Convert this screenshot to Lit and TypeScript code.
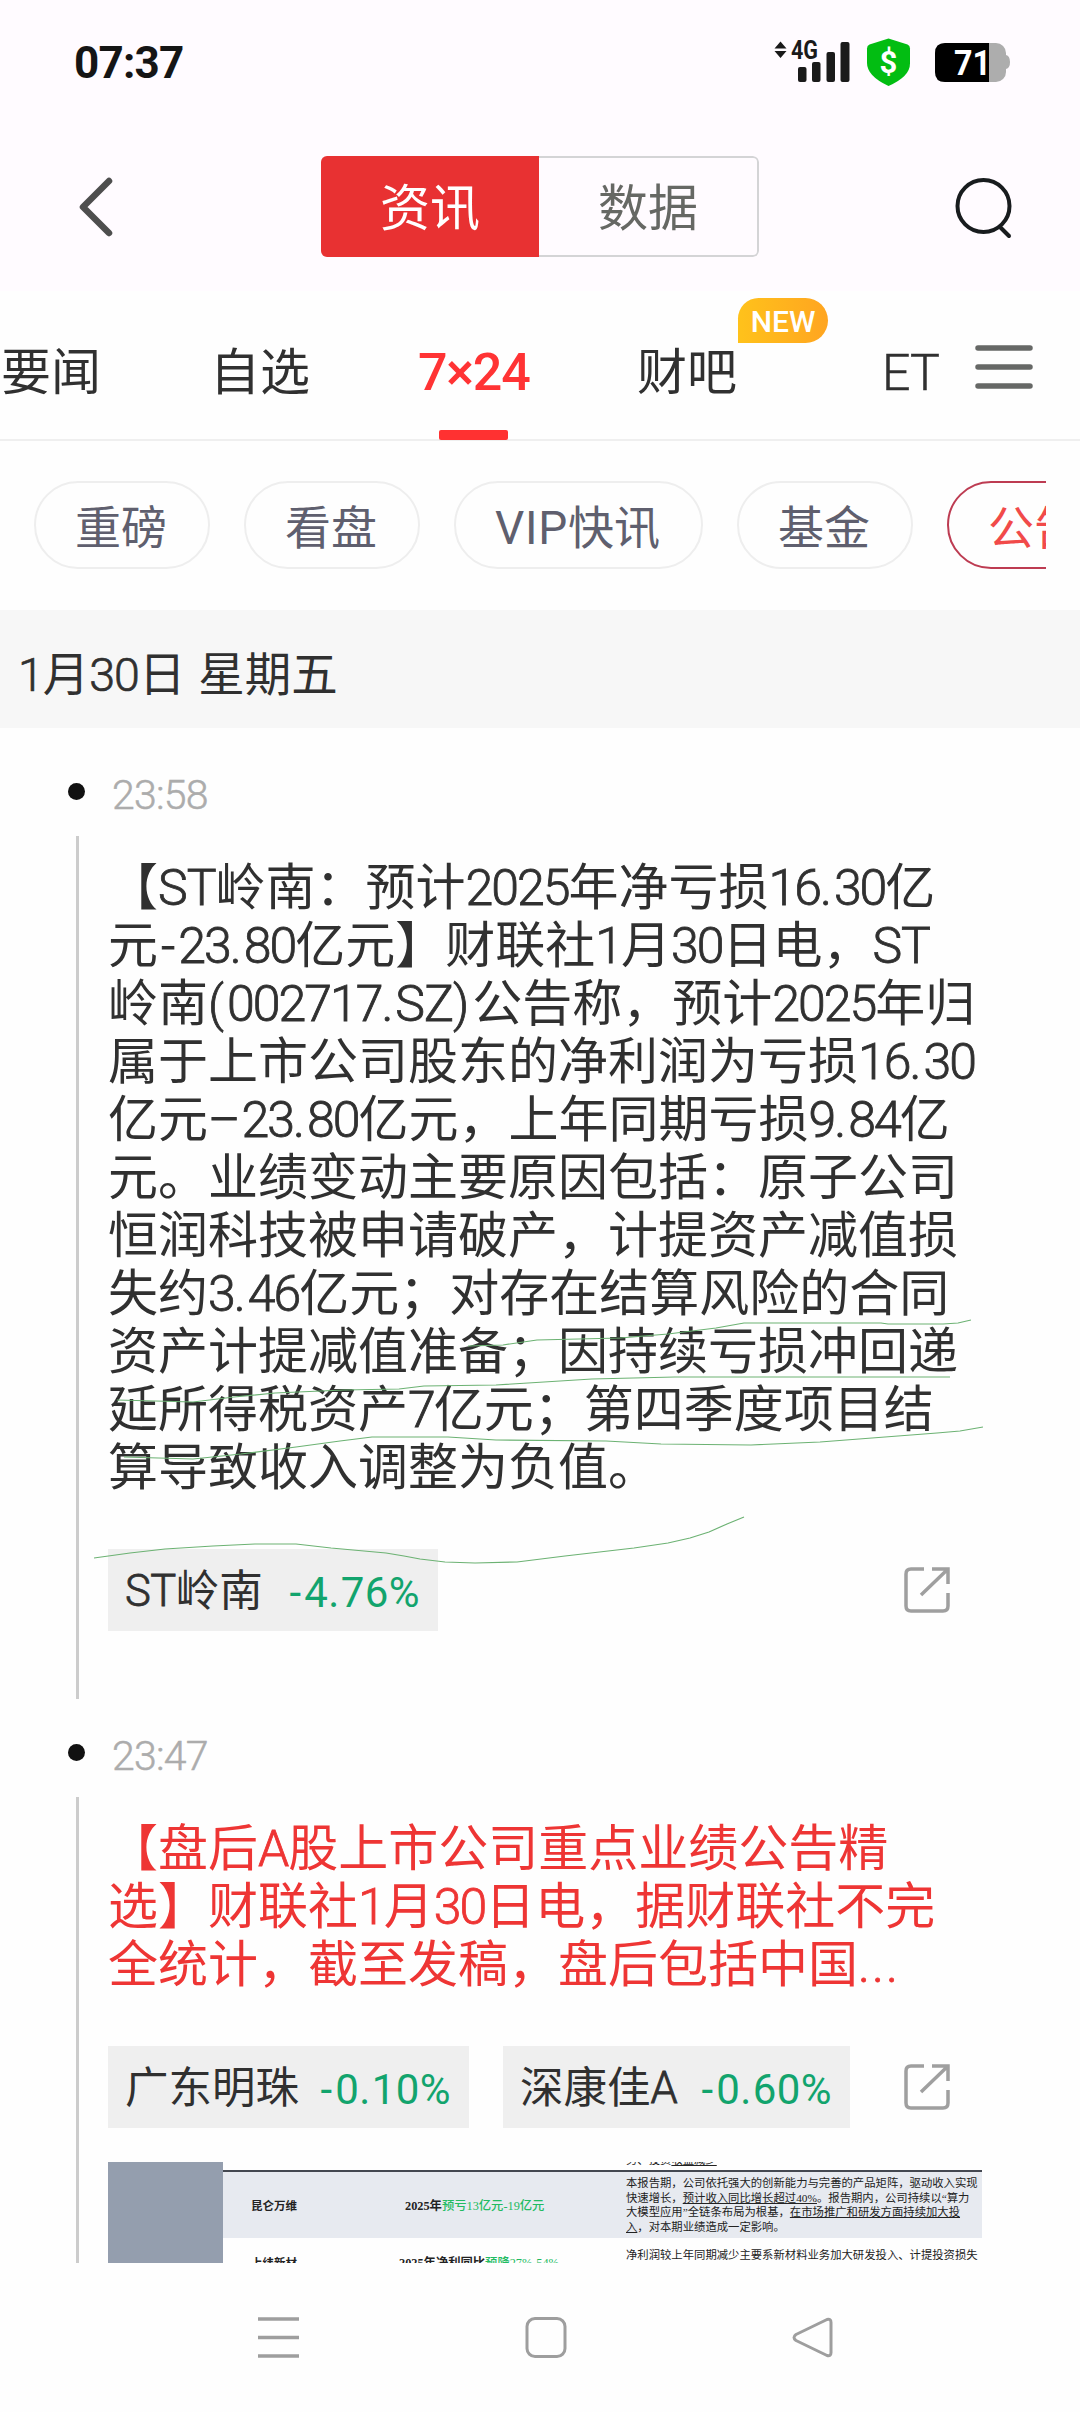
import { LitElement, html, css, svg } from 'lit';
import { customElement, property } from 'lit/decorators.js';

// Each kind of Latin character gets its own tracking next to the Chinese text.
const kindOf = (part: string) => {
  if (/^[0-9]/.test(part)) return 'lt d';
  if (/^[A-Za-z]/.test(part)) return 'lt a';
  if (/^[.]/.test(part)) return 'lt p';
  if (/^[-]/.test(part)) return 'lt h';
  if (/^[()]/.test(part)) return 'lt r';
  return 'lt b';
};

const mix = (text: string) =>
  text
    .split(/([0-9]+|[A-Za-z]+|[.]+|-|[()]|\u2013|%| )/)
    .filter((part) => part.length > 0)
    .map((part) => (/^[\x20-\x7e\u2013]/.test(part) ? html`<span class=${kindOf(part)}>${part}</span>` : part));

interface Stock {
  name: string;
  change: string;
  kind: string;
}

const FIRST = [
  '【ST岭南：预计2025年净亏损16.30亿',
  '元-23.80亿元】财联社1月30日电，ST',
  '岭南(002717.SZ)公告称，预计2025年归',
  '属于上市公司股东的净利润为亏损16.30',
  '亿元–23.80亿元，上年同期亏损9.84亿',
  '元。业绩变动主要原因包括：原子公司',
  '恒润科技被申请破产，计提资产减值损',
  '失约3.46亿元；对存在结算风险的合同',
  '资产计提减值准备；因持续亏损冲回递',
  '延所得税资产7亿元；第四季度项目结',
  '算导致收入调整为负值。',
];

const SECOND = [
  '【盘后A股上市公司重点业绩公告精',
  '选】财联社1月30日电，据财联社不完',
  '全统计，截至发稿，盘后包括中国...',
];

@customElement('status-bar')
class StatusBar extends LitElement {
  static styles = css`
    :host {
      display: flex;
      height: 124px;
      padding: 0 70px 0 74px;
      align-items: center;
      justify-content: space-between;
      font-family: Roboto, sans-serif;
    }
    .time {
      font-size: 44px;
      line-height: 50px;
      padding-top: 2px;
      font-weight: 700;
      letter-spacing: -0.8px;
      color: #151515;
    }
    .icons {
      display: block;
    }
  `;
  render() {
    return html`
      <span class="time">07:37</span>
      <svg class="icons" width="240" height="60" viewBox="770 32 240 60">
        <path d="M780.500 41.500l6 7h-12zM780.500 58l6-7h-12z" fill="#1a1a1a" />
        <text x="791" y="58.500" font-size="25" font-weight="700" textLength="27" lengthAdjust="spacingAndGlyphs" fill="#1a1a1a">4G</text>
        <g fill="#1a1a1a">
          <rect x="798" y="67" width="8.500" height="15" rx="2" />
          <rect x="812" y="62" width="8.500" height="20" rx="2" />
          <rect x="826.500" y="52" width="8.500" height="30" rx="2" />
          <rect x="840.500" y="42" width="9" height="40" rx="2" />
        </g>
        <path d="M888.500 38.500l19 6q2.500 1 2.500 4v15q0 13-21.500 22.500Q867 76 867 63V48.500q0-3 2.500-4z" fill="#02bd12" />
        <text x="888.500" y="73" font-size="31" font-weight="700" text-anchor="middle" fill="#fff">$</text>
        <path d="M1003 55h3q4 1 4 7t-4 7h-3z" fill="#adadad" />
        <rect x="935" y="43" width="71" height="39" rx="10" fill="#adadad" />
        <path d="M945 43h44v39h-44q-10 0-10-10V53q0-10 10-10z" fill="#000" />
        <text x="954" y="75" font-size="35" font-weight="700" textLength="37" lengthAdjust="spacingAndGlyphs" fill="#fff">71</text>
      </svg>
    `;
  }
}

@customElement('title-bar')
class TitleBar extends LitElement {
  static styles = css`
    :host {
      display: flex;
      height: 167px;
      padding: 0 64px 2px 76px;
      box-sizing: border-box;
      align-items: center;
      justify-content: space-between;
      font-family: Roboto, 'Noto Sans CJK SC', sans-serif;
    }
    svg {
      display: block;
    }
    .seg {
      display: flex;
      width: 438px;
      height: 101px;
      margin-left: 12px;
      box-sizing: border-box;
      border-radius: 6px;
      overflow: hidden;
      font-size: 50px;
      line-height: 106px;
      text-align: center;
    }
    .on {
      flex: 1;
      background: #e83132;
      color: #fff;
    }
    .off {
      flex: 1;
      box-sizing: border-box;
      border: 2px solid #d4d4d6;
      border-left: 0;
      border-radius: 0 6px 6px 0;
      line-height: 102px;
      color: #666864;
    }
  `;
  render() {
    return html`
      <svg width="40" height="64" viewBox="0 0 40 64">
        <path d="M33 6L7 32l26 26" fill="none" stroke="#4e4e4e" stroke-width="6.500" stroke-linecap="round" stroke-linejoin="round" />
      </svg>
      <div class="seg"><div class="on">资讯</div><div class="off">数据</div></div>
      <svg width="64" height="64" viewBox="0 0 64 64">
        <circle cx="31.500" cy="31" r="26" fill="none" stroke="#181c1e" stroke-width="4" />
        <path d="M49 53l8 8" stroke="#181c1e" stroke-width="4" stroke-linecap="round" />
      </svg>
    `;
  }
}

@customElement('channel-tabs')
class ChannelTabs extends LitElement {
  static styles = css`
    :host {
      display: flex;
      height: 150px;
      box-sizing: border-box;
      border-bottom: 2px solid #efefef;
      font-family: Roboto, 'Noto Sans CJK SC', sans-serif;
      font-size: 50px;
      line-height: 58px;
      color: #303030;
      padding-top: 53px;
    }
    .tab {
      position: relative;
      white-space: nowrap;
      flex: none;
    }
    .w1 {
      width: 210px;
      padding-left: 1px;
      box-sizing: border-box;
    }
    .w2 {
      width: 208px;
    }
    .w3 {
      width: 219px;
    }
    .w4 {
      width: 245px;
    }
    .w5 {
      width: 93px;
      font-weight: 300;
      letter-spacing: -1px;
      -webkit-text-stroke: 0.5px currentColor;
    }
    .active {
      color: #ff3334;
      font-weight: 500;
      font-size: 52px;
      letter-spacing: -1.2px;
    }
    .active::after {
      content: '';
      position: absolute;
      left: 21px;
      top: 86px;
      width: 69px;
      height: 10px;
      border-radius: 2px;
      background: #ff3131;
    }
    .badge {
      position: absolute;
      left: 101px;
      top: -46px;
      width: 90px;
      height: 45px;
      border-radius: 21px 23px 23px 0;
      background: linear-gradient(90deg, #ffc21b, #ffa520);
      color: #fff;
      font-size: 30px;
      line-height: 47px;
      font-weight: 500;
      text-align: center;
    }
    .menu {
      display: block;
      margin-top: 1px;
    }
  `;
  render() {
    return html`
      <div class="tab w1">要闻</div>
      <div class="tab w2">自选</div>
      <div class="tab w3 active">7×24</div>
      <div class="tab w4">财吧<span class="badge">NEW</span></div>
      <div class="tab w5">ET</div>
      <svg class="menu" width="58" height="60" viewBox="0 0 58 60">
        <path d="M3 3h52M3 22h52M3 41h52" stroke="#666866" stroke-width="5.500" stroke-linecap="round" />
      </svg>
    `;
  }
}

@customElement('filter-pills')
class FilterPills extends LitElement {
  static styles = css`
    :host {
      display: flex;
      width: 1046px;
      height: 169px;
      box-sizing: border-box;
      padding: 40px 0 0 34px;
      gap: 34px;
      overflow: hidden;
      font-family: Roboto, 'Noto Sans CJK SC', sans-serif;
    }
    .pill {
      flex: none;
      height: 88px;
      box-sizing: border-box;
      border: 2px solid #eee;
      border-radius: 44px;
      padding: 0 41px 0 39px;
      font-size: 46px;
      line-height: 90px;
      color: #5f5f6e;
      white-space: nowrap;
    }
    .lt {
      letter-spacing: 0.7px;
    }
    .on {
      border-color: #bd3c52;
      color: #f14a49;
    }
  `;
  render() {
    return html`
      <div class="pill">重磅</div>
      <div class="pill">看盘</div>
      <div class="pill">${mix('VIP快讯')}</div>
      <div class="pill">基金</div>
      <div class="pill on">公告</div>
    `;
  }
}

@customElement('report-preview')
class ReportPreview extends LitElement {
  static styles = css`
    :host {
      display: grid;
      grid-template-columns: 115px 759px;
      width: 874px;
      height: 101px;
      overflow: hidden;
      font-family: 'Liberation Serif', 'Noto Sans CJK SC', serif;
      font-size: 11.35px;
      color: #222;
    }
    .side {
      background: #949eae;
    }
    .prev {
      height: 8px;
      overflow: hidden;
      padding-left: 403px;
      line-height: 6px;
    }
    .prev span {
      display: block;
      margin-top: -5px;
      white-space: nowrap;
    }
    .row {
      display: grid;
      grid-template-columns: 151px 252px 356px;
      align-items: center;
      height: 68px;
      box-sizing: border-box;
      border-top: 2px solid #444851;
      background: #e7eaf0;
      white-space: nowrap;
    }
    .name {
      font-weight: 700;
      padding-left: 28px;
      font-size: 11.5px;
    }
    .mid {
      font-weight: 700;
      padding-left: 31px;
      font-size: 12.3px;
    }
    .g {
      font-weight: 500;
      color: #22bb62;
    }
    .row .desc {
      line-height: 14.5px;
    }
    .next {
      background: #fefefe;
      border: 0;
      height: 47px;
    }
    .next .mid {
      padding-left: 25px;
    }
    .next .desc {
      padding-bottom: 12px;
    }
    u {
      text-underline-offset: 1px;
    }
  `;
  render() {
    return html`
      <div class="side"></div>
      <div>
        <div class="prev"><span>务、投资<u>收益减少</u></span></div>
        <div class="row">
          <div class="name">昆仑万维</div>
          <div class="mid">2025年<span class="g">预亏13亿元-19亿元</span></div>
          <div class="desc">
            本报告期，公司依托强大的创新能力与完善的产品矩阵，驱动收入实现<br />快速增长，<u>预计收入同比增长超过40%</u>。报告期内，公司持续以“算力<br />大模型应用”全链条布局为根基，<u>在市场推广和研发方面持续加大投</u><br /><u>入</u>，对本期业绩造成一定影响。
          </div>
        </div>
        <div class="row next">
          <div class="name">上纬新材</div>
          <div class="mid">2025年净利同比<span class="g">预降27%-54%</span></div>
          <div class="desc">净利润较上年同期减少主要系新材料业务加大研发投入、计提投资损失</div>
        </div>
      </div>
    `;
  }
}

@customElement('news-item')
class NewsItem extends LitElement {
  @property() time = '';
  @property({ attribute: false }) lines: string[] = [];
  @property({ attribute: false }) stocks: Stock[] = [];
  @property({ type: Boolean }) hot = false;
  @property({ type: Boolean }) preview = false;

  static styles = css`
    :host {
      display: block;
      font-family: Roboto, 'Noto Sans CJK SC', sans-serif;
    }
    .head {
      display: flex;
      align-items: center;
      height: 108px;
      box-sizing: border-box;
      padding: 26px 0 0 68px;
      gap: 27px;
      color: #acacac;
      font-size: 41px;
      font-weight: 300;
      -webkit-text-stroke: 0.5px currentColor;
      line-height: 50px;
      letter-spacing: -0.8px;
    }
    .head.follow {
      height: 98px;
      padding-top: 16px;
    }
    .dot {
      width: 17px;
      height: 17px;
      border-radius: 50%;
      background: #111;
      margin-bottom: 7px;
    }
    .body {
      margin-left: 76px;
      border-left: 3px solid #ccc;
      padding: 23px 0 0 29px;
    }
    .line {
      height: 58px;
      line-height: 58px;
      font-size: 50px;
      white-space: nowrap;
      color: #303030;
    }
    .lt {
      font-weight: 300;
      -webkit-text-stroke: 0.8px currentColor;
    }
    .d {
      letter-spacing: -2px;
    }
    .a {
      letter-spacing: -1px;
    }
    .p {
      letter-spacing: 2px;
    }
    .h {
      letter-spacing: 3px;
      margin-left: 3px;
    }
    .r {
      letter-spacing: 3px;
    }
    .b {
      letter-spacing: 1px;
    }
    .hot .line {
      color: #ee3534;
    }
    .tools {
      display: flex;
      width: 842px;
      height: 82px;
      margin-top: 52px;
      gap: 34px;
      align-items: center;
    }
    .tag {
      display: flex;
      height: 82px;
      box-sizing: border-box;
      padding: 0 18px 0 17px;
      justify-content: space-between;
      background: #efefef;
      font-size: 43.5px;
      line-height: 86px;
      white-space: nowrap;
      color: #303030;
    }
    .tag .a {
      letter-spacing: -0.5px;
    }
    .st {
      width: 330px;
    }
    .gd {
      width: 361px;
    }
    .sz {
      width: 347px;
    }
    .chg {
      color: #12a46d;
      font-size: 42px;
      line-height: 88px;
    }
    .chg .lt {
      font-weight: 400;
      letter-spacing: 0.4px;
      -webkit-text-stroke: 0;
    }
    .chg .p {
      letter-spacing: 1.5px;
    }
    .chg .h {
      letter-spacing: 3px;
    }
    .share {
      margin-left: auto;
      display: block;
    }
    .pad {
      height: 68px;
    }
    .shot {
      padding-top: 34px;
    }
  `;

  render() {
    return html`
      <div class="head ${this.hot ? 'follow' : ''}"><span class="dot"></span><span>${this.time}</span></div>
      <div class="body ${this.hot ? 'hot' : ''}">
        ${this.lines.map((l) => html`<div class="line">${mix(l)}</div>`)}
        <div class="tools">
          ${this.stocks.map(
            (s) => html`<div class="tag ${s.kind}"><span>${mix(s.name)}</span><span class="chg">${mix(s.change)}</span></div>`,
          )}
          <svg class="share" width="46" height="46" viewBox="0 0 46 46">
            <path
              d="M20 2H7Q2 2 2 7v32q0 5 5 5h32q5 0 5-5V26M28 2h16v15M44 2L17 28"
              fill="none"
              stroke="#9f9f9f"
              stroke-width="3.500"
            />
          </svg>
        </div>
        ${this.preview ? html`<div class="shot"><report-preview></report-preview></div>` : html`<div class="pad"></div>`}
      </div>
    `;
  }
}

@customElement('system-nav')
class SystemNav extends LitElement {
  static styles = css`
    :host {
      display: flex;
      justify-content: space-between;
      height: 149px;
      box-sizing: border-box;
      padding: 52px 245px 0 256px;
      background: #fefefe;
    }
    svg {
      display: block;
    }
  `;
  render() {
    return html`
      <svg width="45" height="45" viewBox="0 0 45 45">
        <path d="M2 4h41M2 22.500h41M2 41h41" stroke="#9e9e9e" stroke-width="3.600" />
      </svg>
      <svg width="45" height="45" viewBox="0 0 45 45">
        <rect x="4" y="3.500" width="38" height="38" rx="8" fill="none" stroke="#9e9e9e" stroke-width="3" />
      </svg>
      <svg width="45" height="45" viewBox="0 0 45 45">
        <path d="M37 4.500L6 19.500q-4 3 0 6L37 40.500q4 1 4-3v-30q0-4-4-3z" fill="none" stroke="#9e9e9e" stroke-width="3" stroke-linejoin="round" />
      </svg>
    `;
  }
}

// Freehand pen strokes drawn over the first article.
const STROKES = [
  '468,1346 503,1345 537,1340 620,1338 668,1334 716,1328 744,1323 881,1323 888,1324 943,1324 958,1323 971,1320',
  '117,1400 193,1402 234,1397 275,1393 344,1390 399,1389 424,1386 496,1385 592,1379 675,1377 950,1377',
  '124,1457 193,1459 241,1454 296,1447 340,1441 372,1437 448,1437 496,1440 606,1441 661,1444 751,1445 820,1442 937,1433 960,1431 983,1427',
  '94,1558 130,1553 165,1549 213,1546 255,1544 296,1544 331,1548 386,1553 404,1556 420,1559 445,1562 475,1563 517,1562 565,1556 634,1548 668,1543 690,1538 709,1532 727,1524 744,1517',
];

@customElement('app-root')
class AppRoot extends LitElement {
  static styles = css`
    :host {
      display: flex;
      flex-direction: column;
      position: relative;
      width: 1080px;
      height: 2412px;
      overflow: hidden;
      background: #fefefe;
      font-family: Roboto, 'Noto Sans CJK SC', sans-serif;
    }
    .top {
      background: #fffbff;
    }
    .date {
      height: 118px;
      box-sizing: border-box;
      padding: 6px 0 0 18px;
      background: #f7f7f7;
      color: #303030;
      font-size: 46.5px;
      line-height: 118px;
      white-space: nowrap;
    }
    .date .lt {
      font-weight: 300;
      -webkit-text-stroke: 0.7px currentColor;
      letter-spacing: -1px;
    }
    .date .b {
      letter-spacing: 1.5px;
    }
    .feed {
      flex: 1;
      min-height: 0;
      overflow: hidden;
    }
    .pen {
      position: absolute;
      left: 0;
      top: 0;
      pointer-events: none;
    }
  `;
  render() {
    return html`
      <div class="top">
        <status-bar></status-bar>
        <title-bar></title-bar>
      </div>
      <channel-tabs></channel-tabs>
      <filter-pills></filter-pills>
      <div class="date">${mix('1月30日 星期五')}</div>
      <div class="feed">
        <news-item time="23:58" .lines=${FIRST} .stocks=${[{ name: 'ST岭南', change: '-4.76%', kind: 'st' }]}></news-item>
        <news-item
          time="23:47"
          hot
          preview
          .lines=${SECOND}
          .stocks=${[
            { name: '广东明珠', change: '-0.10%', kind: 'gd' },
            { name: '深康佳A', change: '-0.60%', kind: 'sz' },
          ]}
        ></news-item>
      </div>
      <system-nav></system-nav>
      <svg class="pen" width="1080" height="2412" viewBox="0 0 1080 2412">
        ${STROKES.map((p) => svg`<polyline points=${p} fill="none" stroke="#6cb273" stroke-width="1.2" stroke-linejoin="round" />`)}
      </svg>
    `;
  }
}
